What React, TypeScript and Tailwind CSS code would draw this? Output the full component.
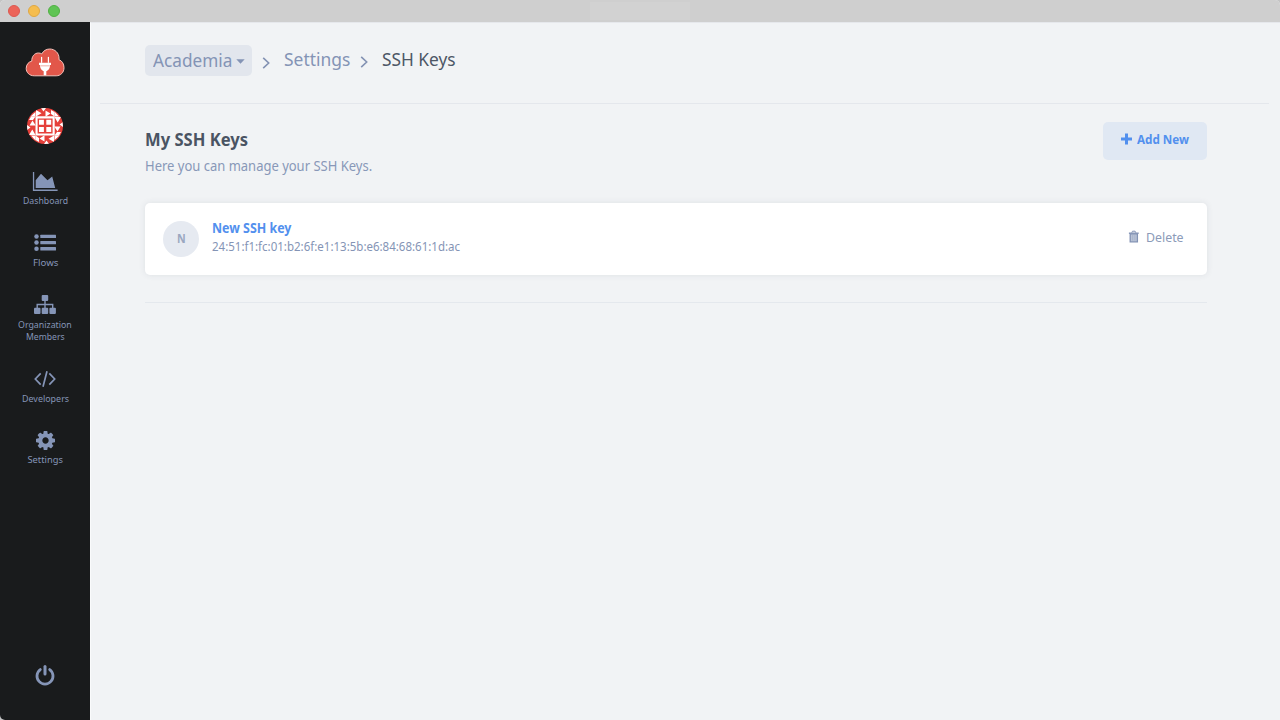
import { useLayoutEffect, useRef, type ReactNode } from "react";

/* Condenses (or widens) a single line of text so that it fills its box exactly. */
function Fit({ className, children }: { className: string; children: ReactNode }) {
  const ref = useRef<HTMLSpanElement>(null);
  useLayoutEffect(() => {
    const el = ref.current;
    if (!el || !el.parentElement) return;
    el.style.transform = `scaleX(${el.parentElement.clientWidth / el.offsetWidth})`;
  }, []);
  return (
    <span className={`block shrink-0 whitespace-nowrap ${className}`}>
      <span ref={ref} className="inline-block origin-left align-top">
        {children}
      </span>
    </span>
  );
}

function Logo() {
  return (
    <svg className="h-[30px] w-10" viewBox="0 0 40 30">
      <path
        d="M9.2 27.8C4.5 27.8 1.200 24.500 1.200 20.400c0-3.700 2.300-6.500 5.600-7.300C6.600 8.400 9.500 5 13.500 5c1.200 0 2.400.3 3.300.9C18.300 2.800 21.300 1 24.700 1c5.200 0 9.300 4 9.300 9v1.700c3 1 5 4.200 5 8 0 4.700-3.300 8.100-7.800 8.100z"
        fill="#e2574a"
        stroke="#f6c3bb"
        strokeWidth="1"
      />
      <path d="M16.600 9.300v5M23.400 9.300v5" stroke="#fff" strokeWidth="1.200" strokeLinecap="round" />
      <path d="M14 14.800h12v2.200h-1c0 3.200-1.300 5.300-3.700 6.200v4.100h-2.600v-4.100c-2.400-.9-3.700-3-3.700-6.200h-1z" fill="#fff" />
      <path d="M15.200 17h9.600v1.500h-9.400z" fill="#f3c9c4" />
    </svg>
  );
}

function Avatar() {
  return (
    <svg className="size-9 rounded-full" viewBox="0 0 36 36">
      <rect width="36" height="36" fill="#e5403a" />
      <g fill="#fff">
        {[0, 90, 180, 270].map((angle) => (
          <g key={angle} transform={`rotate(${angle} 18 18)`}>
            <path d="M9 2l5.500 3.300L9 8.500zM14 0h5l-2.500 3.500zM18.500 2.500l5 3-5 3.200zM24 2l3.500 2v4.500L24 6zM3.500 8.500L8.500 4v4.500z" />
          </g>
        ))}
        <path d="M8.500 8.200h19.200v19.200H8.500z" />
      </g>
      <path d="M10.600 10.400h15v15h-15z" fill="#e5403a" />
      <path d="M12 11.800h4.900v4.900H12zM19.300 11.800h4.900v4.900h-4.900zM12 19.100h4.900V24H12zM19.300 19.100h4.900V24h-4.900z" fill="#fff" />
    </svg>
  );
}

function AreaIcon() {
  return (
    <svg className="h-5 w-[26px]" viewBox="0 0 26 20" fill="currentColor">
      <path d="M.9 0h1.300v17.500h23.400V19H.9zM3.700 16V8.200L9 1.700l6.500 6.500 4.700-3.700 3 11.500z" />
    </svg>
  );
}

function ListIcon() {
  return (
    <svg className="h-[18px] w-[22px]" viewBox="0 0 22 18" fill="currentColor">
      <circle cx="2.500" cy="2.500" r="2.250" />
      <circle cx="2.500" cy="8.600" r="2.250" />
      <circle cx="2.500" cy="14.800" r="2.250" />
      <rect x="6.300" y=".8" width="15.700" height="3.300" rx=".5" />
      <rect x="6.300" y="6.900" width="15.700" height="3.300" rx=".5" />
      <rect x="6.300" y="13.100" width="15.700" height="3.300" rx=".5" />
    </svg>
  );
}

function SitemapIcon() {
  return (
    <svg className="h-5 w-[22px]" viewBox="0 0 22 20" fill="currentColor">
      <rect x="7.700" y="0" width="6.500" height="6" rx="1" />
      <rect x="0" y="12.700" width="6.500" height="6.200" rx="1" />
      <rect x="7.700" y="12.700" width="6.500" height="6.200" rx="1" />
      <rect x="15.400" y="12.700" width="6.500" height="6.200" rx="1" />
      <path d="M11 5v9M3.200 14V9.500h15.500V14" fill="none" stroke="currentColor" strokeWidth="1.400" />
    </svg>
  );
}

function CodeIcon() {
  return (
    <svg className="h-4 w-[22px]" viewBox="0 0 22 16" fill="none" stroke="currentColor" strokeWidth="1.700">
      <path d="M6.700 2.300L1.300 8l5.400 5.700M15.300 2.300L20.700 8l-5.400 5.700M13 .2L9 15.800" />
    </svg>
  );
}

function CogIcon() {
  return (
    <svg className="size-[19px]" viewBox="128 128 1536 1536" fill="currentColor">
      <path d="M1152 896q0-106-75-181t-181-75-181 75-75 181 75 181 181 75 181-75 75-181zm512-109v222q0 12-8 23t-20 13l-185 28q-19 54-39 91 35 50 107 138 10 12 10 25t-9 23q-27 37-99 108t-94 71q-12 0-26-9l-138-108q-44 23-91 38-16 136-29 186-7 28-36 28h-222q-14 0-24.500-8.500t-11.500-21.500l-28-184q-49-16-90-37l-141 107q-10 9-25 9-14 0-25-11-126-114-165-168-7-10-7-23 0-12 8-23 15-21 51-66.500t54-70.500q-27-50-41-99l-183-27q-13-2-21-12.500t-8-23.500v-222q0-12 8-23t19-13l186-28q14-46 39-92-40-57-107-138-10-12-10-24 0-10 9-23 26-36 98.500-107.500t94.500-71.500q13 0 26 10l138 107q44-23 91-38 16-136 29-186 7-28 36-28h222q14 0 24.500 8.500t11.500 21.500l28 184q49 16 90 37l142-107q9-9 24-9 13 0 25 10 129 119 165 170 7 8 7 22 0 12-8 23-15 21-51 66.500t-54 70.500q26 50 41 98l183 28q13 2 21 12.500t8 23.500z" />
    </svg>
  );
}

function PowerIcon() {
  return (
    <svg className="h-[22px] w-5" viewBox="0 0 20 22" fill="none" stroke="currentColor" strokeLinecap="round">
      <path d="M5.300 5.600a8 8 0 1 0 9.400 0" strokeWidth="2.800" />
      <path d="M10 2.500v7.500" strokeWidth="3" />
    </svg>
  );
}

function TrashIcon() {
  return (
    <svg className="h-[13px] w-[11px]" viewBox="0 0 11 13" fill="none">
      <path d="M3.800 2.700l.7-1.500h2.600l.7 1.500" stroke="#8292b4" strokeWidth="1" />
      <path d="M.9 2.500h9.800v1.400H.900z" fill="#8292b4" />
      <path d="M2.200 3.800h7.200v8H2.200z" fill="#b9c3d6" stroke="#8292b4" strokeWidth="1.300" />
      <path d="M4.700 5v5.500M6.900 5v5.500" stroke="#a3afc8" strokeWidth=".8" />
    </svg>
  );
}

function Chevron() {
  return (
    <svg className="h-3 w-2 shrink-0" viewBox="0 0 8 12" fill="none" stroke="#8392b3" strokeWidth="1.600">
      <path d="M1.200.8L6.700 6l-5.500 5.200" />
    </svg>
  );
}

function NavItem({ icon, children, className }: { icon: ReactNode; children: ReactNode; className: string }) {
  return (
    <a className={`flex flex-col items-center ${className}`}>
      <span className="flex h-5 items-start justify-center">{icon}</span>
      <span className="mt-[3px] flex flex-col items-center text-[9.300px] leading-3">{children}</span>
    </a>
  );
}

export default function App() {
  return (
    <div className="h-[720px] w-[1280px] overflow-hidden bg-[#c4c4c4] font-['Noto_Sans','Open_Sans',sans-serif]">
      <div className="flex h-full flex-col overflow-hidden rounded-t-[5px] rounded-bl-[5px] bg-[#f1f3f5]">
        <div className="flex h-[22px] shrink-0 items-center bg-[#cfcfcf] pl-2">
          <div className="flex w-[582px] gap-2">
            <span className="size-3 rounded-full border border-[#dc5850] bg-[#ec6459]" />
            <span className="size-3 rounded-full border border-[#dfa743] bg-[#f5bd4f]" />
            <span className="size-3 rounded-full border border-[#50b043] bg-[#5fc454]" />
          </div>
          <div className="h-[18px] w-[100px] bg-[#d2d2d2]" />
        </div>

        <div className="flex min-h-0 flex-1">
          <nav className="flex w-[90px] shrink-0 flex-col items-center bg-[#191b1c] pt-[26px] text-[#8595b7]">
            <Logo />
            <div className="mt-[30px]">
              <Avatar />
            </div>
            <NavItem className="mt-7" icon={<AreaIcon />}>
              <Fit className="w-[45px]">Dashboard</Fit>
            </NavItem>
            <NavItem className="mt-[27px]" icon={<ListIcon />}>
              <Fit className="w-[25px]">Flows</Fit>
            </NavItem>
            <NavItem className="mt-[26px]" icon={<SitemapIcon />}>
              <Fit className="mt-px w-[54px]">Organization</Fit>
              <Fit className="w-[39px]">Members</Fit>
            </NavItem>
            <NavItem className="mt-7" icon={<CodeIcon />}>
              <Fit className="-mt-px w-[47px]">Developers</Fit>
            </NavItem>
            <NavItem className="mt-[26px]" icon={<CogIcon />}>
              <Fit className="w-[35px]">Settings</Fit>
            </NavItem>
            <div className="mt-auto mb-[34px]">
              <PowerIcon />
            </div>
          </nav>

          <main className="flex-1 border-l border-[#fafbfc] border-t border-t-[#e6e8ec]">
            <header className="mr-[11px] ml-[9px] flex h-[81px] items-start border-b border-[#e4e7ec] pt-[22px] pl-[45px] text-[18.500px] text-[#8494b5]">
              <div className="flex h-[31px] w-[107px] items-start rounded-[5px] bg-[#e2e6ed] pl-2">
                <Fit className="w-[79px] leading-[30px]">Academia</Fit>
                <svg className="mt-[14px] ml-1 h-[5px] w-[9px]" viewBox="0 0 9 5" fill="currentColor">
                  <path d="M.3.300h8.400L4.500 4.800z" />
                </svg>
              </div>
              <div className="mt-3 ml-[10px]">
                <Chevron />
              </div>
              <Fit className="ml-[14px] w-[66px] leading-7">Settings</Fit>
              <div className="mt-[11px] ml-[10px]">
                <Chevron />
              </div>
              <Fit className="ml-[14px] w-[74px] leading-7 text-[#4d5766]">SSH Keys</Fit>
            </header>

            <section className="mr-[73px] ml-[54px]">
              <div className="flex h-[99px] items-start justify-between pt-[18px]">
                <div>
                  <Fit className="mt-[3px] mb-px w-[103px] text-[18.500px] leading-7 font-bold text-[#4a5463]">
                    My SSH Keys
                  </Fit>
                  <Fit className="w-[227px] text-[13.700px] leading-[23px] text-[#8898b8]">
                    Here you can manage your SSH Keys.
                  </Fit>
                </div>
                <button className="flex h-[38px] w-[104px] items-start rounded-[5px] bg-[#e0e8f3] pt-[11px] pl-[18px] text-[#5290ee]">
                  <svg className="h-3 w-[11px]" viewBox="0 0 11 12" fill="currentColor">
                    <path d="M4 .5h3v4h4v3H7v4H4v-4H0v-3h4z" />
                  </svg>
                  <Fit className="ml-[5px] w-[52px] text-[13px] leading-[13px] font-bold">Add New</Fit>
                </button>
              </div>

              <div className="flex h-[72px] items-start rounded-[5px] bg-white pt-[18px] pl-[18px] shadow-[0_0_6px_rgba(60,70,90,0.1)]">
                <div className="flex size-9 items-center justify-center rounded-full bg-[#e6eaf1] text-[13px] font-bold text-[#9aa7c0]">
                  <Fit className="w-[9px]">N</Fit>
                </div>
                <div className="-mt-[3px] ml-[13px] flex-1">
                  <Fit className="w-[79px] text-[13.500px] leading-5 font-bold text-[#5290ee]">New SSH key</Fit>
                  <Fit className="w-[248px] text-[12.300px] leading-[17px] text-[#8494b5]">
                    24:51:f1:fc:01:b2:6f:e1:13:5b:e6:84:68:61:1d:ac
                  </Fit>
                </div>
                <button className="mt-[9px] mr-[23px] flex items-start text-[#8c9bb9]">
                  <TrashIcon />
                  <Fit className="ml-[7px] w-[38px] text-[13px] leading-[14px]">Delete</Fit>
                </button>
              </div>
              <div className="mt-[27px] h-px bg-[#e4e8ed]" />
            </section>
          </main>
        </div>
      </div>
    </div>
  );
}
